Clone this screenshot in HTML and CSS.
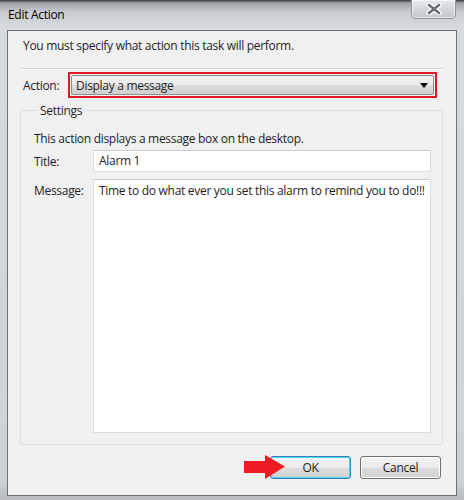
FILE: index.html
```html
<!DOCTYPE html>
<html lang="en">
<head>
    <meta charset="utf-8">
    <title>Edit Action</title>
    <link rel="stylesheet" href="styles.css">
</head>
<body>
    <div class="window">
        <div class="titlebar">
            <span class="title">Edit Action</span>
            <button class="close-btn">
                <svg width="18" height="12" viewBox="0 0 18 12">
                    <path d="M4 2 L14 10 M14 2 L4 10" stroke="#fff" stroke-width="5" stroke-linecap="round"/>
                    <path d="M4 2 L14 10 M14 2 L4 10" stroke="#6a6e75" stroke-width="2.6" stroke-linecap="round"/>
                </svg>
            </button>
        </div>
        <div class="client">
            <p class="intro">You must specify what action this task will perform.</p>
            <hr class="separator">

            <div class="action-row">
                <label>Action:</label>
                <div class="highlight">
                    <div class="combo">
                        <span>Display a message</span>
                        <svg width="8" height="5" viewBox="0 0 8 5"><path d="M0 0 H8 L4 5 Z" fill="#000"/></svg>
                    </div>
                </div>
            </div>

            <fieldset class="settings">
                <legend>Settings</legend>
                <p class="desc">This action displays a message box on the desktop.</p>
                <div class="field">
                    <label>Title:</label>
                    <div class="input">Alarm 1</div>
                </div>
                <div class="field">
                    <label>Message:</label>
                    <div class="input textarea">Time to do what ever you set this alarm to remind you to do!!!</div>
                </div>
            </fieldset>

            <div class="buttons">
                <svg class="arrow" width="41" height="24" viewBox="0 0 41 24">
                    <path d="M0 6 H21 V0 L41 11.5 L21 24 V18 H0 Z" fill="#ed1c24"/>
                </svg>
                <button class="btn default">OK</button>
                <button class="btn">Cancel</button>
            </div>
        </div>
    </div>
</body>
</html>
```

FILE: styles.css
```css
body {
    margin: 0;
    font-family: "Open Sans", "Noto Sans", sans-serif;
    font-size: 12px;
    letter-spacing: -0.3px;
    color: #1e1e1e;
}
.window {
    width: 464px;
    height: 500px;
    background: linear-gradient(to bottom, #3a3a3a 0px, #9ea2a6 3px, #c9cdd1 12px, #d7dadd 30px, #cfd2d5 480px, #b9bcbf 500px);
    box-sizing: border-box;
    display: flex;
    flex-direction: column;
}
.titlebar {
    height: 30px;
    display: flex;
    justify-content: space-between;
    align-items: flex-start;
    padding: 0 8px 0 8px;
}
.title {
    margin-top: 6px;
    color: #000;
    font-size: 12px;
}
.close-btn {
    width: 45px;
    height: 20px;
    margin-top: -1px;
    border: 1px solid #8c9097;
    border-radius: 0 0 5px 5px;
    background: linear-gradient(to bottom, #e8eaec, #d3d6da 50%, #c4c8cc);
    box-shadow: inset 0 0 0 1px rgba(255, 255, 255, 0.6);
    display: flex;
    align-items: center;
    justify-content: center;
    padding: 0;
}
.client {
    margin: 0 7px;
    height: 466px;
    box-sizing: border-box;
    background: #f0f0f0;
    border: 1px solid #6f7378;
    padding: 0 12px 0 13px;
}
.intro {
    margin: 7px 0 0 2px;
    line-height: 16px;
}
.separator {
    border: none;
    border-top: 1px solid #d5d5d5;
    border-bottom: 1px solid #fff;
    margin: 14px 0 0 -1px;
}
.action-row {
    display: flex;
    align-items: center;
    margin-top: 2px;
}
.action-row label {
    width: 45px;
    padding-left: 2px;
}
.highlight {
    width: 369px;
    height: 26px;
    box-sizing: border-box;
    border: 2px solid #e2172a;
    padding: 1px;
}
.combo {
    height: 100%;
    box-sizing: border-box;
    border: 1px solid #8e8f8f;
    border-radius: 2px;
    background: linear-gradient(to bottom, #f2f2f2, #ebebeb 50%, #dddddd 51%, #cfcfcf);
    display: flex;
    align-items: center;
    justify-content: space-between;
    padding: 0 5px 0 4px;
}
.settings {
    margin: 4px 0 0 -1px;
    width: 423px;
    height: 343px;
    box-sizing: border-box;
    border: 1px solid #d5dfe5;
    border-radius: 3px;
    padding: 0 11px 0 13px;
}
.settings legend {
    padding: 0 2px;
    margin-left: 4px;
}
.desc {
    margin: 12px 0 0 0;
    line-height: 16px;
}
.field {
    display: flex;
    margin-top: 3px;
}
.field label {
    width: 59px;
    padding-top: 3px;
}
.input {
    flex: 1;
    height: 22px;
    box-sizing: border-box;
    background: #fff;
    border: 1px solid #d8dde3;
    border-top-color: #c8cdd3;
    padding: 2px 5px;
    line-height: 16px;
}
.field + .field {
    margin-top: 7px;
}
.input.textarea {
    height: 254px;
    padding-top: 3px;
}
.buttons {
    display: flex;
    justify-content: flex-end;
    align-items: center;
    gap: 9px;
    margin-top: 10px;
    padding-right: 3px;
}
.arrow {
    margin-right: -24px;
    position: relative;
    z-index: 1;
}
.btn {
    width: 81px;
    height: 23px;
    font-family: inherit;
    font-size: 12px;
    letter-spacing: inherit;
    color: #1e1e1e;
    border: 1px solid #707070;
    border-radius: 3px;
    background: linear-gradient(to bottom, #f2f2f2, #ebebeb 50%, #dddddd 51%, #cfcfcf);
    box-shadow: inset 0 0 0 1px #fcfcfc;
    padding: 0;
}
.btn.default {
    border-color: #3c7fb1;
    box-shadow: inset 0 0 0 1px #48d7fb;
}
```
